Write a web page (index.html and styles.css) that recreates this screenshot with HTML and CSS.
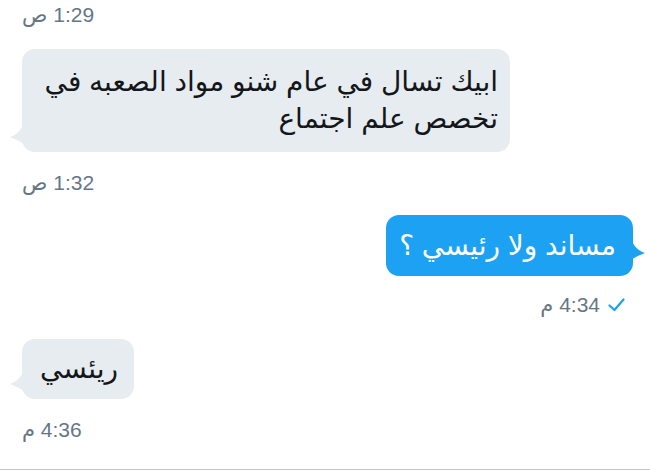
FILE: index.html
```html
<!DOCTYPE html>
<html lang="ar" dir="rtl">
<head>
    <meta charset="UTF-8">
    <meta name="viewport" content="width=device-width, initial-scale=1.0">
    <title>المحادثة</title>
    <link rel="stylesheet" href="styles.css">
</head>
<body>
    <div class="chat">
        <div class="time time-in">1:29 ص</div>

        <div class="msg msg-in">
            <div class="bubble bubble-long">
                ابيك تسال في عام شنو مواد الصعبه في تخصص علم اجتماع
                <svg class="tail" width="14" height="26" viewBox="0 0 14 26"><path d="M14 0 C14 9 9 16 0 19 C5 21 10 23 14 26 Z"/></svg>
            </div>
        </div>
        <div class="time time-in t2">1:32 ص</div>

        <div class="msg msg-out">
            <div class="bubble">
                مساند ولا رئيسي ؟
                <svg class="tail" width="14" height="26" viewBox="0 0 14 26"><path d="M0 0 C0 9 5 16 14 19 C9 21 4 23 0 26 Z"/></svg>
            </div>
        </div>
        <div class="time time-out t3">
            <svg class="check" width="17" height="14" viewBox="0 0 17 14"><path d="M1.5 7.5 L6.5 12 L15.5 1.5"/></svg>
            <span>4:34 م</span>
        </div>

        <div class="msg msg-in m3">
            <div class="bubble">
                ريئسي
                <svg class="tail" width="14" height="26" viewBox="0 0 14 26"><path d="M14 0 C14 9 9 16 0 19 C5 21 10 23 14 26 Z"/></svg>
            </div>
        </div>
        <div class="time time-in t2">4:36 م</div>
    </div>
</body>
</html>
```

FILE: styles.css
```css
body {
    margin: 0;
    background-color: #fff;
    font-family: "Liberation Sans", "DejaVu Sans", sans-serif;
}
.chat {
    height: 470px;
    box-sizing: border-box;
    padding: 3px 17px 0 22px;
    border-bottom: 1px solid #c6c6c6;
    overflow: hidden;
    display: flex;
    flex-direction: column;
}
.time {
    font-size: 21px;
    line-height: 24px;
    color: #657786;
    display: flex;
    align-items: center;
    gap: 8px;
}
.time-in {
    align-self: flex-end;
}
.time-out {
    align-self: flex-start;
    padding-right: 8px;
}
.t2 {
    margin-top: 19px;
}
.t3 {
    margin-top: 17px;
}
.check {
    fill: none;
    stroke: #1da1f2;
    stroke-width: 2.2;
    stroke-linecap: round;
    stroke-linejoin: round;
}
.msg {
    display: flex;
    margin-top: 22px;
}
.msg-in {
    justify-content: flex-end;
}
.msg-out {
    justify-content: flex-start;
    margin-top: 20px;
}
.bubble {
    position: relative;
    font-size: 28px;
    line-height: 37px;
    padding: 12px 17px;
    border-radius: 13px;
    background-color: #e6ecf0;
    color: #14171a;
}
.bubble-long {
    max-width: 462px;
    padding: 14px 12px 15px 14px;
}
.m3 .bubble {
    padding: 11px 16px 12px 18px;
}
.msg-out .bubble {
    background-color: #1da1f2;
    color: #fff;
    padding: 12px 17px 12px 13px;
}
.tail {
    position: absolute;
    bottom: 8px;
}
.msg-in .tail {
    left: -12px;
    fill: #e6ecf0;
}
.msg-out .tail {
    right: -12px;
    bottom: 16px;
    fill: #1da1f2;
}
```
